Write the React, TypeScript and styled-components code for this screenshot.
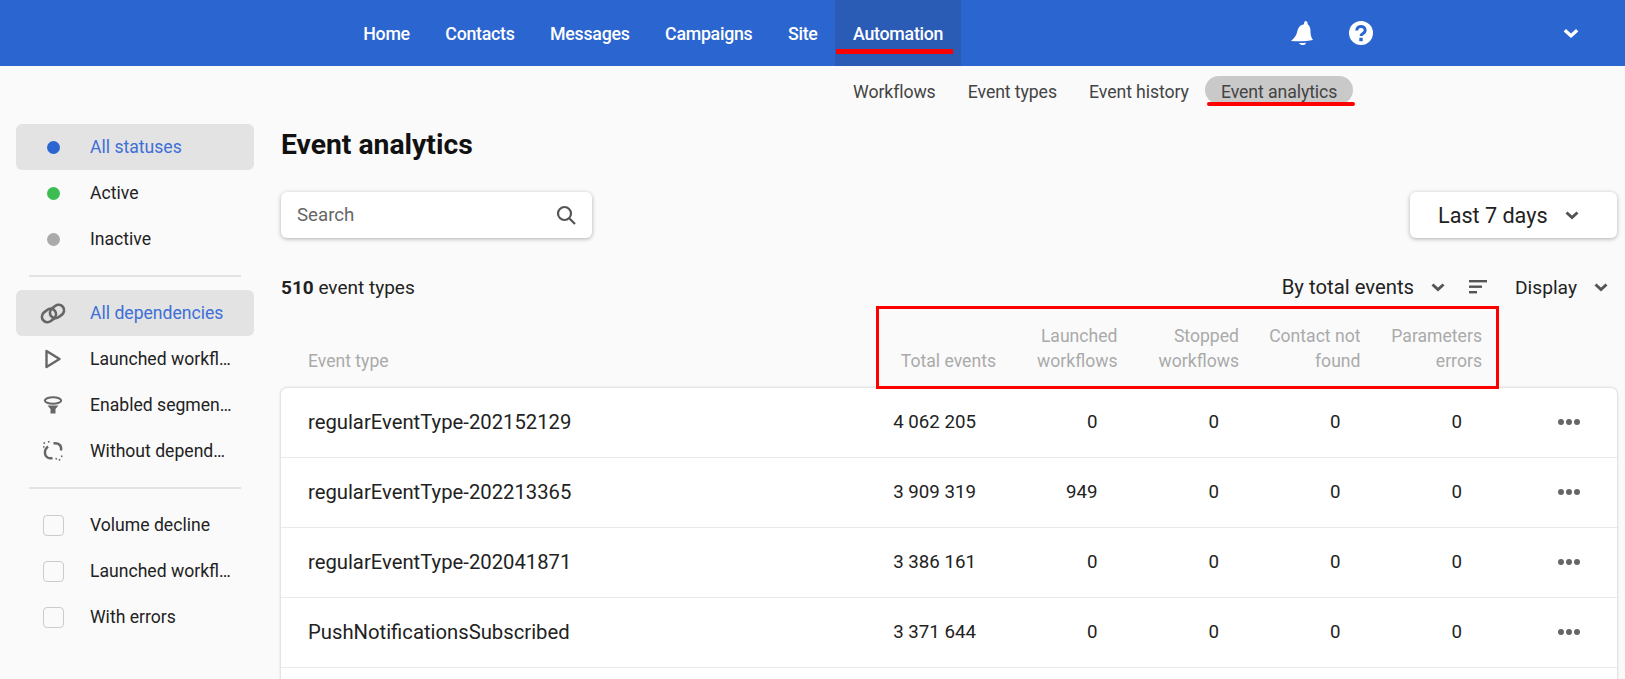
import styled, { createGlobalStyle } from 'styled-components'

const GlobalStyle = createGlobalStyle`
  html, body {
    margin: 0;
    height: 100%;
    background: #fafafa;
    font-family: Roboto, "Liberation Sans", sans-serif;
  }
`

const Page = styled.div`
  height: 100vh;
  overflow: hidden;
`

const TopBar = styled.header`
  height: 66px;
  background: #2b65cf;
  display: flex;
  align-items: stretch;
  padding-left: 345.5px;
  color: #fff;
`

const TopNav = styled.nav`
  display: flex;
  align-items: stretch;
`

const TopItem = styled.a<{ $active?: boolean }>`
  position: relative;
  display: flex;
  align-items: center;
  padding: 0 17.75px;
  font-size: 17.8px;
  font-weight: 500;
  letter-spacing: -0.28px;
  background: ${(p) => (p.$active ? '#2a5bb5' : 'transparent')};
`

const TopUnderline = styled.span`
  position: absolute;
  left: 1px;
  right: 8px;
  top: 49px;
  height: 5px;
  background: #f00;
`

const TopActions = styled.div`
  display: flex;
  align-items: center;
  margin-left: 329px;
  gap: 35px;
`

const AccountChevron = styled.div`
  display: flex;
  margin-left: 154px;
`

const SubNav = styled.nav`
  height: 48px;
  box-sizing: border-box;
  display: flex;
  align-items: flex-start;
  padding: 10px 0 0 837px;
  font-size: 17.7px;
  color: #444;
`

const SubItem = styled.a<{ $active?: boolean }>`
  position: relative;
  height: 28px;
  line-height: 32px;
  padding: 0 16.1px;
  border-radius: 14px;
  letter-spacing: -0.1px;
  background: ${(p) => (p.$active ? '#c9c9c9' : 'transparent')};
`

const SubUnderline = styled.span`
  position: absolute;
  left: 2px;
  right: -2px;
  top: 26px;
  height: 4px;
  border-radius: 2px;
  background: #f00;
`

const Body = styled.div`
  display: flex;
`

const Sidebar = styled.aside`
  width: 238px;
  margin-left: 16px;
  margin-right: 27px;
  padding-top: 10px;
  flex-shrink: 0;
`

const SideItem = styled.div<{ $active?: boolean }>`
  height: 46px;
  display: flex;
  align-items: center;
  border-radius: 6px;
  font-size: 17.6px;
  color: ${(p) => (p.$active ? '#3d6fd6' : '#222')};
  background: ${(p) => (p.$active ? '#e3e3e3' : 'transparent')};
`

const SideIcon = styled.span`
  width: 74px;
  flex-shrink: 0;
  display: flex;
  justify-content: center;
`

const SideLabel = styled.span`
  min-width: 0;
  width: 143px;
  white-space: nowrap;
  overflow: hidden;
  text-overflow: ellipsis;
`

const Dot = styled.span<{ $color: string }>`
  width: 13px;
  height: 13px;
  border-radius: 50%;
  background: ${(p) => p.$color};
`

const Box = styled.span`
  width: 21px;
  height: 21px;
  box-sizing: border-box;
  border: 1px solid #ccc;
  border-radius: 4px;
`

const SideDivider = styled.hr`
  border: 0;
  height: 2px;
  background: #e3e3e3;
  margin: 13px;
`

const Main = styled.main`
  flex: 1;
  min-width: 0;
  margin-right: 8px;
`

const Title = styled.h1`
  margin: 0;
  padding-top: 14px;
  height: 78px;
  box-sizing: border-box;
  font-size: 28.3px;
  line-height: 34px;
  font-weight: 700;
  color: #111;
`

const Toolbar = styled.div`
  display: flex;
  justify-content: space-between;
`

const Card = styled.div`
  height: 46px;
  background: #fff;
  border-radius: 6px;
  box-shadow: 0 1px 4px rgba(0, 0, 0, 0.3);
  display: flex;
  align-items: center;
  box-sizing: border-box;
`

const SearchBox = styled(Card)`
  width: 311px;
  padding: 0 16px;
  justify-content: space-between;
  font-size: 18.7px;
  color: #666;
`

const PeriodBox = styled(Card)`
  width: 207px;
  padding-left: 28px;
  gap: 16px;
  font-size: 21.6px;
  color: #222;
`

const CountRow = styled.div`
  display: flex;
  align-items: center;
  justify-content: space-between;
  margin-top: 26px;
  height: 46px;
  font-size: 19px;
  color: #222;
`

const Controls = styled.div`
  display: flex;
  align-items: center;
  padding-right: 8px;
`

const ControlLabel = styled.span<{ $size: number }>`
  margin-right: 16px;
  font-size: ${(p) => p.$size}px;
`

const SortIcon = styled.span`
  display: flex;
  margin: 0 28px 0 23px;
`

const tableGrid = `
  display: grid;
  grid-template-columns: 1fr 121.5px 121.5px 121.5px 121.5px 121.5px 135px;
`

const HeadRow = styled.div`
  ${tableGrid}
  position: relative;
  height: 77.5px;
  padding: 0 0 14px 27px;
  box-sizing: border-box;
  font-size: 17.6px;
  line-height: 25px;
  color: #aaa;
  align-items: end;
`

const HeadCell = styled.div`
  text-align: right;
`

const RedFrame = styled.div`
  position: absolute;
  left: 595px;
  top: -4px;
  width: 623px;
  height: 83px;
  box-sizing: border-box;
  border: 3px solid #f00;
`

const Table = styled.div`
  background: #fff;
  border-radius: 6px 6px 0 0;
  box-shadow: 0 0 3px rgba(0, 0, 0, 0.25);
`

const Row = styled.div`
  ${tableGrid}
  height: 70.1px;
  padding-left: 27px;
  box-sizing: border-box;
  align-items: center;
  color: #222;
  border-bottom: 1px solid #eaeaea;
`

const NameCell = styled.div`
  font-size: 20.25px;
`

const NumCell = styled.div`
  text-align: right;
  padding-right: 20px;
  font-size: 18.7px;
`

const MoreCell = styled.div`
  display: flex;
  justify-content: flex-end;
  padding-right: 37px;
`

const Chevron = ({ color = '#555', size = 16 }: { color?: string; size?: number }) => (
  <svg width={size} height={size} viewBox="0 0 16 16" fill="none">
    <path d="M2.5 5.5 8 10.5l5.500-5" stroke={color} strokeWidth="3" />
  </svg>
)

const rows = [
  ['regularEventType-202152129', '4 062 205', '0'],
  ['regularEventType-202213365', '3 909 319', '949'],
  ['regularEventType-202041871', '3 386 161', '0'],
  ['PushNotificationsSubscribed', '3 371 644', '0'],
  ['', '', ''],
]

export default function App() {
  return (
    <Page>
      <GlobalStyle />
      <TopBar>
        <TopNav>
          <TopItem>Home</TopItem>
          <TopItem>Contacts</TopItem>
          <TopItem>Messages</TopItem>
          <TopItem>Campaigns</TopItem>
          <TopItem>Site</TopItem>
          <TopItem $active>
            Automation
            <TopUnderline />
          </TopItem>
        </TopNav>
        <TopActions>
          <svg width="24" height="27" viewBox="0 0 24 27" fill="#fff">
            <path d="M15.500 1c1.500 0 2.500 1.500 2 3 2.500 2 3 4.500 3 7.500 0 3 .7 6 2.500 8.500-6 1.500-15 1.500-22 1 2.500-2.500 5-4.500 6-8.500 1-4 2.500-7.500 7-8.200.1-1.600.5-3.300 1.500-3.300z" />
            <path d="M9 23c2 .2 5 .1 7-.3-.3 2.800-5 3.500-7 .3z" />
          </svg>
          <svg width="24" height="24" viewBox="0 0 24 24">
            <circle cx="12" cy="12" r="12" fill="#fff" />
            <path d="M7.800 9.500c0-5.300 8.400-5.300 8.400 0 0 3-4.200 2.800-4.200 5.500" fill="none" stroke="#2b65cf" strokeWidth="3" />
            <rect x="10.300" y="16.800" width="3.400" height="3.400" fill="#2b65cf" />
          </svg>
          <AccountChevron>
            <Chevron color="#fff" size={18} />
          </AccountChevron>
        </TopActions>
      </TopBar>
      <SubNav>
        <SubItem>Workflows</SubItem>
        <SubItem>Event types</SubItem>
        <SubItem>Event history</SubItem>
        <SubItem $active>
          Event analytics
          <SubUnderline />
        </SubItem>
      </SubNav>
      <Body>
        <Sidebar>
          <SideItem $active>
            <SideIcon><Dot $color="#2b65cf" /></SideIcon>
            <SideLabel>All statuses</SideLabel>
          </SideItem>
          <SideItem>
            <SideIcon><Dot $color="#3bbd52" /></SideIcon>
            <SideLabel>Active</SideLabel>
          </SideItem>
          <SideItem>
            <SideIcon><Dot $color="#aaa" /></SideIcon>
            <SideLabel>Inactive</SideLabel>
          </SideItem>
          <SideDivider />
          <SideItem $active>
            <SideIcon>
              <svg width="26" height="21" viewBox="0 0 26 21" fill="none" stroke="#666" strokeWidth="2.600">
                <rect x="-7.500" y="-5.500" width="15" height="11" rx="5.500" transform="translate(9 12.500) rotate(-38)" />
                <rect x="-7.500" y="-5.500" width="15" height="11" rx="5.500" transform="translate(17 8.500) rotate(-38)" />
              </svg>
            </SideIcon>
            <SideLabel>All dependencies</SideLabel>
          </SideItem>
          <SideItem>
            <SideIcon>
              <svg width="18" height="20" viewBox="0 0 18 20" fill="none" stroke="#666" strokeWidth="2.400">
                <path d="M2.500 2v16L15.500 10z" strokeLinejoin="round" />
              </svg>
            </SideIcon>
            <SideLabel>Launched workflows</SideLabel>
          </SideItem>
          <SideItem>
            <SideIcon>
              <svg width="20" height="18" viewBox="0 0 20 18" fill="#666">
                <ellipse cx="10" cy="4.500" rx="8.200" ry="3.200" fill="none" stroke="#666" strokeWidth="2" />
                <path d="M4.500 9.500h11l-3 3.500v4.500h-5V13z" />
              </svg>
            </SideIcon>
            <SideLabel>Enabled segments</SideLabel>
          </SideItem>
          <SideItem>
            <SideIcon>
              <svg width="24" height="24" viewBox="0 0 24 24" fill="none" stroke="#666" strokeWidth="2.400">
                <path d="M12.500 4.500c5-1 8.500 2 7.500 7" />
                <path d="M7 7.500c-4 3-4 9-.5 11 1.500.8 3.500 1 5 .5" />
                <path d="M2.500 3.500l1.500 1.200M7.500 2l.4 1.600M2 8l1.500-.2M15 20.500l.5-1.500M19 21.500l-1-1.300M21.500 17.500l-1.500-.4" strokeWidth="1.600" />
              </svg>
            </SideIcon>
            <SideLabel>Without dependencies</SideLabel>
          </SideItem>
          <SideDivider />
          <SideItem>
            <SideIcon><Box /></SideIcon>
            <SideLabel>Volume decline</SideLabel>
          </SideItem>
          <SideItem>
            <SideIcon><Box /></SideIcon>
            <SideLabel>Launched workflows</SideLabel>
          </SideItem>
          <SideItem>
            <SideIcon><Box /></SideIcon>
            <SideLabel>With errors</SideLabel>
          </SideItem>
        </Sidebar>
        <Main>
          <Title>Event analytics</Title>
          <Toolbar>
            <SearchBox>
              Search
              <svg width="20" height="20" viewBox="0 0 20 20" fill="none" stroke="#555" strokeWidth="2.200">
                <circle cx="8.500" cy="8.500" r="6.500" />
                <path d="M13.500 13.500 19 19" />
              </svg>
            </SearchBox>
            <PeriodBox>
              Last 7 days
              <Chevron />
            </PeriodBox>
          </Toolbar>
          <CountRow>
            <span><b>510</b> event types</span>
            <Controls>
              <ControlLabel $size={20.3}>By total events</ControlLabel>
              <Chevron />
              <SortIcon>
                <svg width="18" height="14" viewBox="0 0 18 14" fill="#555">
                  <rect x="0" y="0" width="18" height="2.400" />
                  <rect x="0" y="5.500" width="13" height="2.400" />
                  <rect x="0" y="11" width="8" height="2.400" />
                </svg>
              </SortIcon>
              <ControlLabel $size={19.2}>Display</ControlLabel>
              <Chevron />
            </Controls>
          </CountRow>
          <HeadRow>
            <div>Event type</div>
            <HeadCell>Total events</HeadCell>
            <HeadCell>Launched<br />workflows</HeadCell>
            <HeadCell>Stopped<br />workflows</HeadCell>
            <HeadCell>Contact not<br />found</HeadCell>
            <HeadCell>Parameters<br />errors</HeadCell>
            <RedFrame />
          </HeadRow>
          <Table>
            {rows.map((row, i) => (
              <Row key={i}>
                <NameCell>{row[0]}</NameCell>
                {row[0] && (
                  <>
                    <NumCell>{row[1]}</NumCell>
                    <NumCell>{row[2]}</NumCell>
                    <NumCell>0</NumCell>
                    <NumCell>0</NumCell>
                    <NumCell>0</NumCell>
                    <MoreCell>
                      <svg width="22" height="6" viewBox="0 0 22 6" fill="#666">
                        <circle cx="3" cy="3" r="3" />
                        <circle cx="11" cy="3" r="3" />
                        <circle cx="19" cy="3" r="3" />
                      </svg>
                    </MoreCell>
                  </>
                )}
              </Row>
            ))}
          </Table>
        </Main>
      </Body>
    </Page>
  )
}
